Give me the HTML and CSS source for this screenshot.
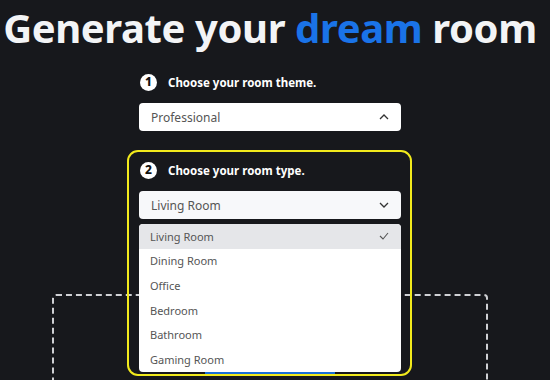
FILE: index.html
```html
<!DOCTYPE html>
<html lang="en">
<head>
    <meta charset="UTF-8">
    <meta name="viewport" content="width=device-width, initial-scale=1.0">
    <title>Generate your dream room</title>
    <link rel="stylesheet" href="styles.css">
</head>
<body>
    <header class="page-head">
        <h1 class="title">Generate your <span class="accent">dream</span> room</h1>
    </header>

    <main class="page">
        <div class="steps">
            <div class="step">
                <div class="step-head">
                    <span class="step-num">1</span>
                    <p>Choose your room theme.</p>
                </div>
                <div class="select">
                    <span>Professional</span>
                    <svg width="10" height="6" viewBox="0 0 10 6"><path d="M1 5 L5 1 L9 5" fill="none" stroke="#333" stroke-width="1.3"/></svg>
                </div>
            </div>

            <div class="step step-room">
                <div class="highlight"></div>
                <div class="step-head">
                    <span class="step-num">2</span>
                    <p>Choose your room type.</p>
                </div>
                <div class="select select-open">
                    <span>Living Room</span>
                    <svg width="10" height="6" viewBox="0 0 10 6"><path d="M1 1 L5 5 L9 1" fill="none" stroke="#333" stroke-width="1.3"/></svg>
                </div>
                <ul class="options">
                    <li class="selected">Living Room
                        <svg width="10" height="8" viewBox="0 0 10 8"><path d="M1 4 L4 7 L9 1" fill="none" stroke="#555" stroke-width="1.1"/></svg>
                    </li>
                    <li>Dining Room</li>
                    <li>Office</li>
                    <li>Bedroom</li>
                    <li>Bathroom</li>
                    <li>Gaming Room</li>
                </ul>
            </div>

            <div class="dropzone">
                <div class="upload-btn"></div>
            </div>
        </div>
    </main>
</body>
</html>
```

FILE: styles.css
```css
/* Room generator page */
body {
    margin: 0;
    background-color: #17181c;
    font-family: "Noto Sans", "Open Sans", Arial, sans-serif;
    color: #f3f4f6;
}

.page-head {
    width: 540px;
    display: flex;
    justify-content: center;
}

.title {
    margin: 0;
    font-size: 40px;
    line-height: 55px;
    font-weight: 700;
    letter-spacing: -0.4px;
    white-space: nowrap;
    color: #f3f4f6;
}

.accent {
    color: #1a73e8;
}

/* the rest of the page is cut at the bottom of the window */
.page {
    width: 540px;
    height: 325px;
    overflow: hidden;
    display: flex;
    flex-direction: column;
    align-items: center;
}

.steps {
    width: 262px;
    margin-top: 18px;
    display: flex;
    flex-direction: column;
}

.step {
    position: relative;
}

.step-room {
    margin-top: 30px;
}

.step-head {
    display: flex;
    align-items: center;
    gap: 11px;
    height: 18px;
    padding-left: 1px;
}

.step-head p {
    margin: 0;
    font-size: 11.5px;
    font-weight: 700;
    color: #ffffff;
}

.step-num {
    width: 17px;
    height: 17px;
    border-radius: 50%;
    background-color: #ffffff;
    color: #111;
    font-size: 12px;
    font-weight: 800;
    display: flex;
    align-items: center;
    justify-content: center;
    line-height: 1;
}

.select {
    margin-top: 12px;
    height: 28px;
    background-color: #ffffff;
    border-radius: 4px;
    display: flex;
    align-items: center;
    justify-content: space-between;
    padding: 0 12px;
    font-size: 12px;
    color: #555;
}

.select-open {
    background-color: #f7f8fa;
}

/* open listbox, lies over the drop zone */
.options {
    position: absolute;
    top: 63px;
    left: 0;
    right: 0;
    margin: 0;
    padding: 0;
    list-style: none;
    background-color: #ffffff;
    border-radius: 4px;
    overflow: hidden;
    z-index: 3;
}

.options li {
    height: 24.6px;
    display: flex;
    align-items: center;
    justify-content: space-between;
    padding: 0 12px 0 11px;
    font-size: 11px;
    color: #555;
}

.options li.selected {
    background-color: #e5e6e9;
}

/* yellow annotation around step 2 */
.highlight {
    position: absolute;
    top: -11px;
    left: -12px;
    right: -11px;
    height: 222px;
    border: 2px solid #f2ea1c;
    border-radius: 11px;
    z-index: 4;
    pointer-events: none;
}

.dropzone {
    margin: 75px -87px 0 -87px;
    height: 120px;
    flex-shrink: 0;
    border: 2px dashed #cfd0d4;
    border-radius: 4px;
    display: flex;
    justify-content: center;
}

.upload-btn {
    margin-top: 75px;
    width: 130px;
    height: 3px;
    background-color: #1a6fd6;
}
```
